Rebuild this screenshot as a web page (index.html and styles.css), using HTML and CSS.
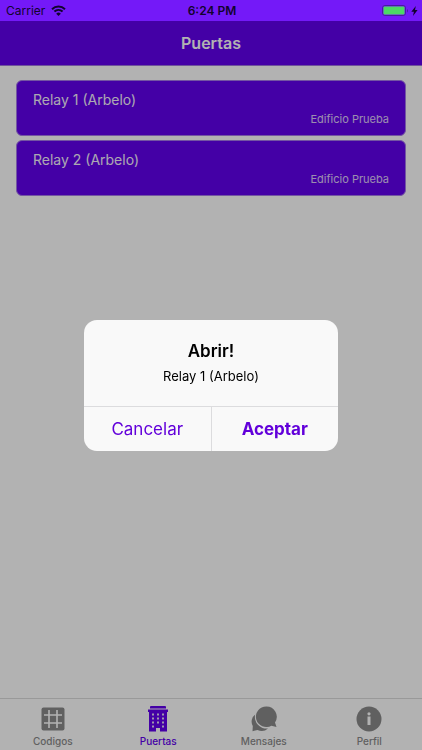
FILE: index.html
```html
<!DOCTYPE html>
<html lang="es">
<head>
    <meta charset="UTF-8">
    <meta name="viewport" content="width=device-width, initial-scale=1.0">
    <title>Puertas</title>
    <link rel="stylesheet" href="styles.css">
</head>
<body>

    <div class="status-bar">
        <div class="status-left">
            <span>Carrier</span>
            <svg class="wifi" viewBox="0 0 15 11" aria-hidden="true">
                <path d="M1 4.2a9.4 9.4 0 0 1 13 0M3.4 6.6a6 6 0 0 1 8.2 0" fill="none" stroke="currentColor" stroke-width="2"/>
                <path d="M7.5 11L5.2 8.7a3.3 3.3 0 0 1 4.6 0z" fill="currentColor"/>
            </svg>
        </div>
        <div class="status-time">6:24 PM</div>
        <div class="status-right">
            <svg class="battery" viewBox="0 0 27 11" aria-hidden="true">
                <rect x="0.5" y="0.5" width="23" height="10" rx="2.5" fill="none" stroke="#4a18a0"/>
                <rect x="1.5" y="1.5" width="21" height="8" rx="1" fill="#4cd964"/>
                <path d="M25 4v3.4a2 2 0 0 0 0-3.4z" fill="#4a18a0"/>
            </svg>
            <svg class="bolt" viewBox="0 0 7 10" aria-hidden="true">
                <path d="M4.8 0L0.3 5.7h2.6L2 10l4.6-5.9H4z" fill="currentColor"/>
            </svg>
        </div>
    </div>

    <header class="toolbar">
        <h1>Puertas</h1>
    </header>

    <main class="content">
        <button class="card" type="button">
            <span class="card-title">Relay 1 (Arbelo)</span>
            <span class="card-building">Edificio Prueba</span>
        </button>
        <button class="card" type="button">
            <span class="card-title">Relay 2 (Arbelo)</span>
            <span class="card-building">Edificio Prueba</span>
        </button>
    </main>

    <nav class="tabs">
        <a class="tab" href="#codigos">
            <svg viewBox="0 0 26 26" aria-hidden="true">
                <rect x="1.5" y="1.5" width="23" height="23" rx="2" fill="currentColor"/>
                <path d="M9 4v18M17 4v18M4 9h18M4 17h18" fill="none" stroke="#fff" stroke-width="1.6"/>
            </svg>
            <span>Codigos</span>
        </a>
        <a class="tab active" href="#puertas">
            <svg viewBox="0 0 26 26" aria-hidden="true">
                <path d="M6 0h14a1 1 0 0 1 1 1v1.500H5V1a1 1 0 0 1 1-1zM3 3.500h20V6h-1v19.500h-7V22h-4v3.500H4V6H3z" fill="currentColor"/>
                <path d="M7 7.500h2v2H7zM12 7.500h2v2h-2zM17 7.500h2v2h-2zM7 11.500h2v2H7zM12 11.500h2v2h-2zM17 11.500h2v2h-2zM7 15.500h2v2H7zM12 15.500h2v2h-2zM17 15.500h2v2h-2zM7 19.500h2v2H7zM17 19.500h2v2h-2z" fill="#e6dcf8"/>
            </svg>
            <span>Puertas</span>
        </a>
        <a class="tab" href="#mensajes">
            <svg viewBox="0 0 26 26" aria-hidden="true">
                <path d="M4.200 8.500A8.800 8.800 0 0 0 1.800 20L1.500 25.200L6.500 24A9.500 9.500 0 0 0 17 22.500A11.500 11.500 0 0 1 4.200 8.500z" fill="currentColor"/>
                <path d="M15.200 0.500a10.300 10.300 0 1 0 5.200 19.200L25.500 21L24 16.500A10.300 10.300 0 0 0 15.200 0.500z" fill="currentColor"/>
            </svg>
            <span>Mensajes</span>
        </a>
        <a class="tab" href="#perfil">
            <svg viewBox="0 0 26 26" aria-hidden="true">
                <circle cx="13" cy="13" r="12.500" fill="currentColor"/>
                <circle cx="13" cy="7.800" r="1.600" fill="#fff"/>
                <path d="M11.500 10.500h3v8.500h-3z" fill="#fff"/>
            </svg>
            <span>Perfil</span>
        </a>
    </nav>

    <div class="backdrop">
        <div class="alert" role="alertdialog" aria-labelledby="alert-title" aria-describedby="alert-message">
            <div class="alert-body">
                <h2 id="alert-title">Abrir!</h2>
                <p id="alert-message">Relay 1 (Arbelo)</p>
            </div>
            <div class="alert-buttons">
                <button type="button">Cancelar</button>
                <button class="confirm" type="button">Aceptar</button>
            </div>
        </div>
    </div>

</body>
</html>
```

FILE: styles.css
```css
* {
    box-sizing: border-box;
}

body {
    margin: 0;
    min-height: 100vh;
    display: flex;
    flex-direction: column;
    background: #fff;
    font-family: Inter, sans-serif;
}

h1,
h2,
p {
    margin: 0;
}

button {
    font-family: inherit;
    cursor: pointer;
}

/* Status bar stays above the backdrop */
.status-bar {
    position: relative;
    z-index: 20;
    display: grid;
    grid-template-columns: 1fr auto 1fr;
    align-items: center;
    height: 21px;
    padding: 0 4px 0 6px;
    background: #7419f8;
    color: #12032e;
    font-size: 12px;
}

.status-left,
.status-right {
    display: flex;
    align-items: center;
    gap: 6px;
}

.status-right {
    justify-content: flex-end;
    gap: 2px;
}

.status-time {
    font-weight: 600;
}

.wifi {
    width: 15px;
    height: 11px;
}

.battery {
    width: 27px;
    height: 11px;
}

.bolt {
    width: 7px;
    height: 10px;
}

.toolbar {
    display: flex;
    align-items: center;
    justify-content: center;
    height: 45px;
    background: #6200ee;
    border-bottom: 1px solid #a077df;
    color: #fff;
}

.toolbar h1 {
    font-size: 16px;
    font-weight: 600;
}

.content {
    flex: 1;
    display: flex;
    flex-direction: column;
    gap: 4px;
    padding: 14px 16px;
}

.card {
    display: flex;
    flex-direction: column;
    gap: 3px;
    height: 56px;
    padding: 9px 16px;
    background: #6200ee;
    border: 1px solid #a77be8;
    border-radius: 6px;
    color: #fff;
    text-align: left;
}

.card-title {
    font-size: 14px;
    line-height: 20px;
    opacity: 0.95;
}

.card-building {
    align-self: flex-end;
    font-size: 11px;
    line-height: 12px;
    opacity: 0.8;
}

.tabs {
    display: flex;
    height: 52px;
    border-top: 1px solid #dcdcdc;
}

.tab {
    flex: 1;
    display: flex;
    flex-direction: column;
    align-items: center;
    gap: 2px;
    padding-top: 7px;
    color: #8a8a8a;
    font-size: 10px;
    line-height: 14px;
    font-weight: 500;
    text-decoration: none;
}

.tab svg {
    width: 26px;
    height: 26px;
}

.tab.active {
    color: #6200ee;
}

.backdrop {
    position: fixed;
    inset: 0;
    z-index: 10;
    display: flex;
    align-items: center;
    justify-content: center;
    padding-top: 20px;
    background: rgba(0, 0, 0, 0.3);
}

.alert {
    width: 60%;
    min-width: 254px;
    max-width: 270px;
    overflow: hidden;
    background: #f9f9f9;
    border-radius: 13px;
    text-align: center;
}

.alert-body {
    padding: 20px 16px;
}

.alert h2 {
    margin-bottom: 4px;
    font-size: 17px;
    line-height: 22px;
    font-weight: 600;
}

.alert p {
    font-size: 13px;
    line-height: 20px;
}

.alert-buttons {
    display: flex;
    border-top: 1px solid #dcdcde;
}

.alert-buttons button {
    flex: 1;
    height: 44px;
    padding: 0;
    border: none;
    background: none;
    color: #6200da;
    font-size: 17px;
}

.alert-buttons .confirm {
    border-left: 1px solid #dcdcde;
    font-weight: 700;
}
```
